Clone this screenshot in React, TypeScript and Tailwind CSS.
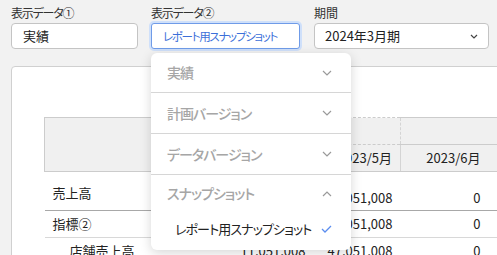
import React from "react";

function ChevronDown({ up = false }: { up?: boolean }) {
  return (
    <svg width="10" height="6" viewBox="0 0 10 6" className="block">
      {up ? (
        <polyline points="1,5 5,1 9,5" fill="none" stroke="#9a9a9a" strokeWidth="1.2" />
      ) : (
        <polyline points="1,1 5,5 9,1" fill="none" stroke="#9a9a9a" strokeWidth="1.2" />
      )}
    </svg>
  );
}

function Check() {
  return (
    <svg width="11" height="8" viewBox="0 0 11 8" className="block">
      <polyline points="1,4 4,7 10,1" fill="none" stroke="#5b8def" strokeWidth="1.3" />
    </svg>
  );
}

export default function App() {
  return (
    <div className="relative w-[497px] h-[255px] overflow-hidden bg-[#f2f2f2] text-[#333] font-['Noto_Sans_CJK_JP',sans-serif] [font-feature-settings:'palt']">
      <div className="flex pt-[4px] pl-[11px]">
        <div className="w-[127px] shrink-0">
          <div className="text-[12px] tracking-[-1.2px] leading-[17px] h-[17px] mb-[2px] text-[#333] whitespace-nowrap">表示データ①</div>
          <div className="h-[26px] border border-[#c4c4c4] rounded-[4px] bg-white pl-[11px] text-[13px] leading-[24px] text-[#222]">
            実績
          </div>
        </div>
        <div className="w-[149px] ml-[13px] shrink-0">
          <div className="text-[12px] tracking-[-1.2px] leading-[17px] h-[17px] mb-[2px] text-[#333] whitespace-nowrap">表示データ②</div>
          <div className="h-[26px] border border-[#6f9be8] rounded-[3px] bg-white pl-[11px] text-[11.5px] tracking-[-1.3px] leading-[24px] text-[#3c6fd9] shadow-[0_0_0_2px_#cfe0fa] whitespace-nowrap">
            レポート用スナップショット
          </div>
        </div>
        <div className="w-[175px] ml-[14px] shrink-0">
          <div className="text-[12px] leading-[17px] h-[17px] mb-[2px] text-[#333]">期間</div>
          <div className="h-[26px] border border-[#c4c4c4] rounded-[4px] bg-white pl-[10px] pr-[10px] text-[13px] leading-[24px] text-[#222] flex items-center justify-between">
            <span>2024年3月期</span>
            <svg width="8" height="5" viewBox="0 0 8 5" className="block">
              <polyline points="1,1 4,4 7,1" fill="none" stroke="#444" strokeWidth="1.2" />
            </svg>
          </div>
        </div>
      </div>

      <div className="ml-[11px] mt-[17px] w-[540px] h-[300px] bg-white border border-[#d0d0d0] rounded-[4px] pt-[50px] pl-[32px]">
        <table className="table-fixed border-collapse text-[13px] text-[#222]">
          <colgroup>
            <col className="w-[171px]" />
            <col className="w-[98px]" />
            <col className="w-[87px]" />
            <col className="w-[110px]" />
          </colgroup>
          <thead>
            <tr className="h-[27px]">
              <th rowSpan={2} className="bg-[#f0f0f0] border border-[#cccccc] border-r-0"></th>
              <th colSpan={2} className="bg-[#f0f0f0] border-t border-b border-[#cccccc] border-r border-r-[#d4d4d4] border-dashed border-t-solid"></th>
              <th className="bg-[#f0f0f0] border-t border-b border-[#cccccc]"></th>
            </tr>
            <tr className="h-[27px]">
              <th className="bg-[#f0f0f0] border-b border-[#cccccc] text-right pr-[8px] font-normal">2023/4月</th>
              <th className="bg-[#f0f0f0] border-b border-[#cccccc] text-right pr-[8px] font-normal border-r border-r-[#d4d4d4] border-r-dashed">2023/5月</th>
              <th className="bg-[#f0f0f0] border-b border-[#cccccc] text-right pr-[30px] font-normal">2023/6月</th>
            </tr>
          </thead>
          <tbody>
            <tr className="h-[39px] border-b border-[#a8a8a8]">
              <td className="align-top pt-[12px] pl-[8px] leading-[18px]">売上高</td>
              <td className="align-top pt-[17px] pr-[8px] text-right leading-[18px]">11,051,008</td>
              <td className="align-top pt-[17px] pr-[8px] text-right leading-[18px]">47,051,008</td>
              <td className="align-top pt-[17px] pr-[30px] text-right leading-[18px]">0</td>
            </tr>
            <tr className="h-[27px] border-b border-[#d8d8d8]">
              <td className="pl-[8px] leading-[18px]">指標②</td>
              <td className="pr-[8px] text-right leading-[18px]">11,051,008</td>
              <td className="pr-[8px] text-right leading-[18px]">47,051,008</td>
              <td className="pr-[30px] text-right leading-[18px]">0</td>
            </tr>
            <tr className="h-[27px]">
              <td className="pl-[25px] leading-[18px]">店舗売上高</td>
              <td className="pr-[8px] text-right leading-[18px]">11,051,008</td>
              <td className="pr-[8px] text-right leading-[18px]">47,051,008</td>
              <td className="pr-[30px] text-right leading-[18px]">0</td>
            </tr>
          </tbody>
        </table>
      </div>

      <div className="absolute left-[151px] top-[53px] w-[200px] bg-white rounded-[6px] shadow-[0_3px_12px_rgba(0,0,0,0.16)] pb-[4px]">
        <div className="h-[40px] border-b border-[#d6d6d6] flex items-center justify-between pl-[16px] pr-[19px] text-[14px] tracking-[-1px] font-medium text-[#a6a6a6]">
          <span>実績</span>
          <ChevronDown />
        </div>
        <div className="h-[41px] border-b border-[#d6d6d6] flex items-center justify-between pl-[16px] pr-[19px] text-[14px] tracking-[-1px] font-medium text-[#a6a6a6]">
          <span>計画バージョン</span>
          <ChevronDown />
        </div>
        <div className="h-[41px] border-b border-[#d6d6d6] flex items-center justify-between pl-[16px] pr-[19px] text-[14px] tracking-[-1px] font-medium text-[#a6a6a6]">
          <span>データバージョン</span>
          <ChevronDown />
        </div>
        <div className="h-[37px] flex items-center justify-between pl-[16px] pr-[19px] text-[14px] tracking-[-1px] font-medium text-[#a6a6a6]">
          <span>スナップショット</span>
          <ChevronDown up />
        </div>
        <div className="h-[34px] flex items-center justify-between pl-[24px] pr-[19px] text-[13px] tracking-[-0.9px] text-[#222] whitespace-nowrap">
          <span>レポート用スナップショット</span>
          <Check />
        </div>
      </div>
    </div>
  );
}
